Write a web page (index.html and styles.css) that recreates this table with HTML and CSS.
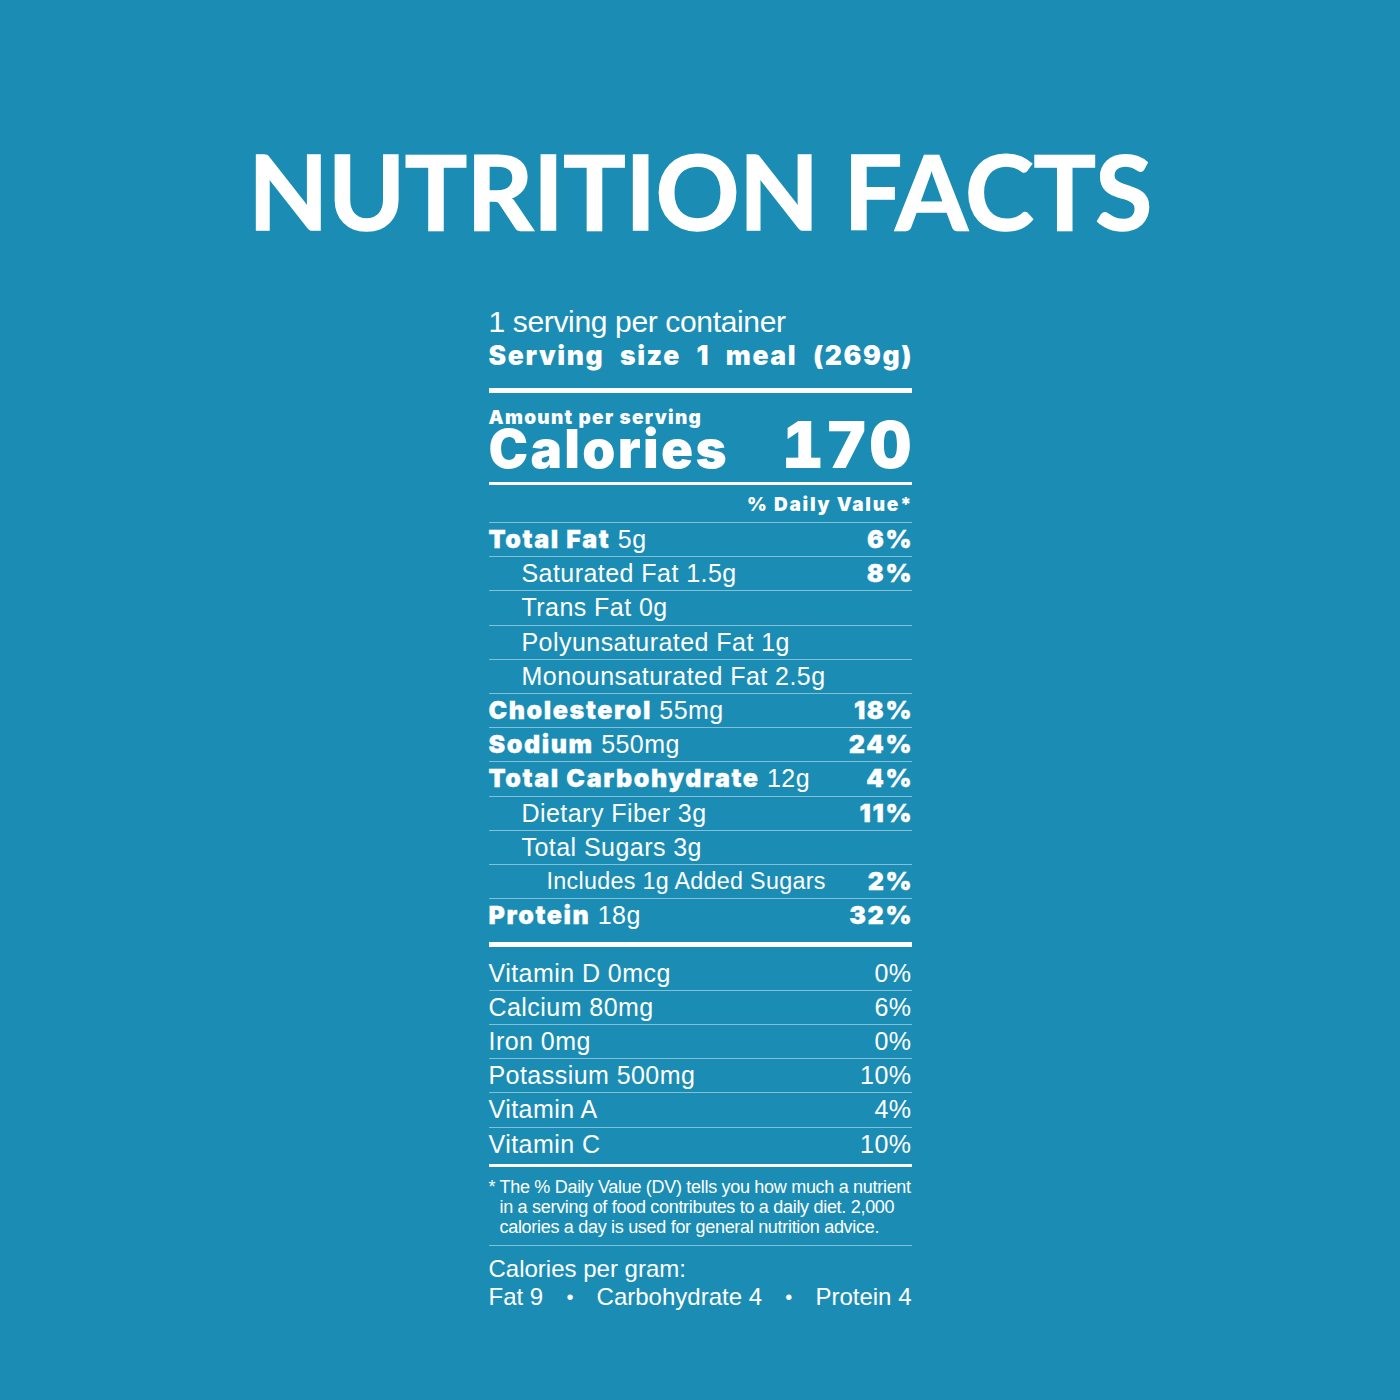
FILE: index.html
```html
<!DOCTYPE html>
<html lang="en">
<head>
<meta charset="utf-8">
<title>Nutrition Facts</title>
<link rel="stylesheet" href="styles.css">
</head>
<body>
<main class="page">
  <h1 class="title">NUTRITION FACTS</h1>
  <section class="label">
    <div class="servings">1 serving per container</div>
    <div class="size">Serving size 1 meal (269g)</div>
    <div class="bar thick top"></div>
    <div class="amount">Amount per serving</div>
    <div class="calories"><span class="cal-word">Calories</span><span class="cal-num">170</span></div>
    <div class="bar medium"></div>
    <div class="dv-head"><span>% Daily Value*</span></div>
    <div class="row"><span><b>Total Fat</b> 5g</span><b class="pct">6%</b></div>
    <div class="row indent"><span>Saturated Fat 1.5g</span><b class="pct">8%</b></div>
    <div class="row indent"><span>Trans Fat 0g</span></div>
    <div class="row indent"><span>Polyunsaturated Fat 1g</span></div>
    <div class="row indent"><span>Monounsaturated Fat 2.5g</span></div>
    <div class="row"><span><b>Cholesterol</b> 55mg</span><b class="pct">18%</b></div>
    <div class="row"><span><b>Sodium</b> 550mg</span><b class="pct">24%</b></div>
    <div class="row"><span><b>Total Carbohydrate</b> 12g</span><b class="pct">4%</b></div>
    <div class="row indent"><span>Dietary Fiber 3g</span><b class="pct">11%</b></div>
    <div class="row indent"><span>Total Sugars 3g</span></div>
    <div class="row indent2"><span>Includes 1g Added Sugars</span><b class="pct">2%</b></div>
    <div class="row last"><span><b>Protein</b> 18g</span><b class="pct">32%</b></div>
    <div class="bar thick"></div>
    <div class="row vit first"><span>Vitamin D 0mcg</span><span>0%</span></div>
    <div class="row vit"><span>Calcium 80mg</span><span>6%</span></div>
    <div class="row vit"><span>Iron 0mg</span><span>0%</span></div>
    <div class="row vit"><span>Potassium 500mg</span><span>10%</span></div>
    <div class="row vit"><span>Vitamin A</span><span>4%</span></div>
    <div class="row vit last"><span>Vitamin C</span><span>10%</span></div>
    <div class="bar mid3"></div>
    <p class="foot"><span class="star">*</span><span>The % Daily Value (DV) tells you how much a nutrient<br>in a serving of food contributes to a daily diet. 2,000<br>calories a day is used for general nutrition advice.</span></p>
    <div class="bar hair"></div>
    <div class="cpg">Calories per gram:</div>
    <div class="cpg-row"><span>Fat 9</span><span class="dot">•</span><span>Carbohydrate 4</span><span class="dot">•</span><span>Protein 4</span></div>
  </section>
</main>
</body>
</html>
```
FILE: styles.css
```css
html, body {
  margin: 0;
  padding: 0;
}
body {
  background: #1b8db4;
  color: #ffffff;
  font-family: "Liberation Sans", Arial, sans-serif;
  width: 1400px;
  height: 1400px;
  overflow: hidden;
}
.page {
  display: flex;
  flex-direction: column;
  align-items: center;
  padding-top: 138px;
}
.title {
  margin: 0;
  font-family: Lato, "Open Sans", sans-serif;
  font-weight: 700;
  font-size: 104px;
  line-height: 104px;
  letter-spacing: -0.5px;
  -webkit-text-stroke: 1.5px #ffffff;
}
.label {
  width: 423px;
  margin-top: 63px;
  display: flex;
  flex-direction: column;
}
b, .size, .amount, .calories, .dv-head {
  font-family: Inter, "Liberation Sans", sans-serif;
  font-weight: 900;
}
.servings {
  font-size: 30px;
  line-height: 34px;
  letter-spacing: -0.35px;
}
.size {
  font-size: 26.5px;
  line-height: 32px;
  letter-spacing: 1.6px;
  text-align: justify;
  text-align-last: justify;
  margin-right: -1.6px;
}
.bar {
  background: #ffffff;
}
.bar.thick {
  height: 5px;
}
.bar.top {
  margin-top: 17px;
}
.bar.medium {
  height: 3px;
  margin-top: 12px;
}
.bar.mid3 {
  height: 3px;
}
.bar.hair {
  height: 1px;
  background: rgba(255, 255, 255, 0.45);
}
.amount {
  font-size: 19px;
  line-height: 18px;
  margin-top: 16px;
  letter-spacing: 1.3px;
}
.calories {
  display: flex;
  justify-content: space-between;
  align-items: baseline;
}
.cal-word {
  font-size: 53px;
  line-height: 42px;
  letter-spacing: 2.3px;
}
.cal-num {
  font-size: 65px;
  line-height: 36px;
  letter-spacing: 2px;
  margin-right: -2px;
  font-variant-numeric: tabular-nums;
}
.dv-head {
  text-align: right;
  font-size: 19px;
  line-height: 34px;
  padding-top: 3px;
  letter-spacing: 1.7px;
  border-bottom: 1px solid rgba(255, 255, 255, 0.45);
}
.dv-head span {
  margin-right: -1.7px;
}
.row {
  display: flex;
  justify-content: space-between;
  font-size: 25px;
  line-height: 33.2px;
  height: 33.2px;
  border-bottom: 1px solid rgba(255, 255, 255, 0.45);
  letter-spacing: 0.45px;
}
.row b {
  font-size: 25px;
  letter-spacing: 1.6px;
  -webkit-text-stroke: 0.3px #ffffff;
}
.row .pct {
  margin-right: -1.6px;
}
.row.indent > span {
  padding-left: 33px;
}
.row.indent2 > span {
  padding-left: 58px;
  font-size: 23.3px;
  letter-spacing: 0.3px;
}
.row.last {
  border-bottom: none;
  height: 43px;
}
.row.vit.first {
  margin-top: 9.5px;
}
.row.vit.last {
  height: 36.5px;
}
.foot {
  margin: 0;
  padding: 10px 0 8px;
  display: flex;
  font-size: 18px;
  line-height: 20px;
  letter-spacing: -0.3px;
}
.star {
  width: 11px;
  flex: none;
}
.cpg {
  font-size: 24px;
  line-height: 30px;
  margin-top: 8px;
}
.cpg-row {
  display: flex;
  justify-content: space-between;
  font-size: 24px;
  line-height: 26px;
}
.dot {
  font-size: 20px;
}
```
